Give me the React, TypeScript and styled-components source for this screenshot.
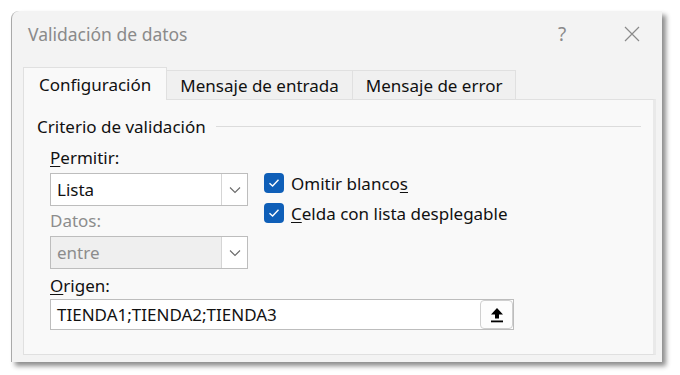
import React from 'react';
import styled, { createGlobalStyle } from 'styled-components';

const GlobalStyle = createGlobalStyle`
  html, body {
    margin: 0;
    padding: 0;
    background: #ffffff;
  }
  body {
    font-family: "Noto Sans", "Open Sans", sans-serif;
    color: #111111;
  }
`;

const Page = styled.div`
  width: 680px;
  height: 375px;
  padding: 11px 0 0 11px;
  box-sizing: border-box;
`;

const Dialog = styled.div`
  width: 651px;
  height: 351px;
  box-sizing: border-box;
  background: #f3f3f3;
  border-left: 1px solid #a9a9a9;
  border-top-left-radius: 8px;
  box-shadow: 4px 4px 5px rgba(0, 0, 0, 0.45);
  display: flex;
  flex-direction: column;
`;

const TitleBar = styled.div`
  height: 45px;
  display: flex;
  align-items: center;
  padding-left: 16px;
  padding-right: 10px;
`;

const Title = styled.div`
  flex: 1;
  font-size: 17.5px;
  color: #8a8a8a;
`;

const TitleButton = styled.div<{ $gap?: number }>`
  width: 40px;
  margin-right: ${(p) => p.$gap ?? 0}px;
  display: flex;
  justify-content: center;
  color: #8a8a8a;
  font-size: 19px;
`;

const Body = styled.div`
  padding: 12px 6px 7px 11px;
  display: flex;
  flex-direction: column;
  flex: 1;
`;

const TabRow = styled.div`
  display: flex;
  align-items: flex-end;
  height: 31px;
`;

const Tab = styled.div<{ $active?: boolean }>`
  box-sizing: border-box;
  height: ${(p) => (p.$active ? '33px' : '29px')};
  padding: 0 ${(p) => (p.$active ? '15px' : '13px')};
  display: flex;
  align-items: center;
  font-size: 17px;
  background: ${(p) => (p.$active ? '#f9f9f9' : '#f0f0f0')};
  border: 1px solid #e0e0e0;
  border-bottom: none;
  margin-bottom: ${(p) => (p.$active ? '-1px' : '0')};
  position: relative;
  z-index: ${(p) => (p.$active ? 1 : 0)};
  & + & {
    border-left: none;
  }
`;

const Panel = styled.div`
  flex: 1;
  background: #f9f9f9;
  border: 1px solid #e0e0e0;
  border-right: 3px solid #e9e9e9;
  padding: 16px 12px 0 13px;
`;

const Legend = styled.div`
  display: flex;
  align-items: center;
  gap: 10px;
  font-size: 17px;
  height: 20px;
  &::after {
    content: '';
    flex: 1;
    height: 1px;
    background: #dcdcdc;
  }
`;

const Content = styled.div`
  padding-left: 13px;
  padding-top: 11px;
`;

const Row = styled.div`
  display: flex;
  gap: 16px;
`;

const Column = styled.div`
  display: flex;
  flex-direction: column;
  width: 198px;
`;

const Label = styled.div<{ $disabled?: boolean }>`
  font-size: 17px;
  height: 22px;
  line-height: 22px;
  margin-bottom: 4px;
  color: ${(p) => (p.$disabled ? '#8c8c8c' : '#111111')};
  u {
    text-underline-offset: 2px;
  }
`;

const Select = styled.div<{ $disabled?: boolean }>`
  box-sizing: border-box;
  height: 33px;
  border: 1px solid #bdbdbd;
  background: ${(p) => (p.$disabled ? '#efefef' : '#ffffff')};
  color: ${(p) => (p.$disabled ? '#8c8c8c' : '#111111')};
  display: flex;
  align-items: stretch;
  font-size: 17px;
  margin-bottom: 4px;
`;

const SelectValue = styled.div`
  flex: 1;
  display: flex;
  align-items: center;
  padding-left: 6px;
`;

const SelectArrow = styled.div`
  width: 25px;
  border-left: 1px solid #d5d5d5;
  background: #ffffff;
  display: flex;
  align-items: center;
  justify-content: center;
`;

const Checks = styled.div`
  display: flex;
  flex-direction: column;
  gap: 10px;
  padding-top: 26px;
`;

const CheckRow = styled.div`
  display: flex;
  align-items: center;
  gap: 7px;
  font-size: 17px;
  height: 20px;
  u {
    text-underline-offset: 2px;
  }
`;

const CheckBox = styled.div`
  width: 20px;
  height: 20px;
  border-radius: 4px;
  background: #0f5fb8;
  display: flex;
  align-items: center;
  justify-content: center;
`;

const SourceLabel = styled(Label)`
  margin-top: 2px;
  margin-bottom: 2px;
`;

const SourceInput = styled.div`
  box-sizing: border-box;
  width: 464px;
  height: 31px;
  border: 1px solid #bdbdbd;
  background: #ffffff;
  display: flex;
  align-items: center;
  font-size: 17px;
  padding-left: 6px;
`;

const SourceText = styled.div`
  flex: 1;
`;

const CollapseButton = styled.div`
  box-sizing: border-box;
  width: 33px;
  height: 29px;
  border: 1px solid #cfcfcf;
  border-radius: 4px;
  background: #fdfdfd;
  display: flex;
  align-items: center;
  justify-content: center;
`;

const Chevron = () => (
  <svg width="12" height="8" viewBox="0 0 12 8">
    <path d="M1 1.5 L6 6.5 L11 1.5" fill="none" stroke="#6a6a6a" strokeWidth="1.1" />
  </svg>
);

const Tick = () => (
  <svg width="12" height="10" viewBox="0 0 12 10">
    <path d="M1.5 5.2 L4.6 8 L10.5 1.8" fill="none" stroke="#ffffff" strokeWidth="1.4" />
  </svg>
);

const UploadIcon = () => (
  <svg width="14" height="16" viewBox="0 0 14 16">
    <path d="M7 1 L13 7.5 L9 7.5 L9 11.5 L5 11.5 L5 7.5 L1 7.5 Z" fill="#000" />
    <rect x="1" y="13.5" width="12" height="1.8" fill="#000" />
  </svg>
);

const App: React.FC = () => {
  return (
    <>
      <GlobalStyle />
      <Page>
        <Dialog>
          <TitleBar>
            <Title>Validación de datos</Title>
            <TitleButton $gap={30}>?</TitleButton>
            <TitleButton>
              <svg width="16" height="16" viewBox="0 0 16 16">
                <path d="M1 1 L15 15 M15 1 L1 15" stroke="#8a8a8a" strokeWidth="1.2" />
              </svg>
            </TitleButton>
          </TitleBar>
          <Body>
            <TabRow>
              <Tab $active>Configuración</Tab>
              <Tab>Mensaje de entrada</Tab>
              <Tab>Mensaje de error</Tab>
            </TabRow>
            <Panel>
              <Legend>Criterio de validación</Legend>
              <Content>
                <Row>
                  <Column>
                    <Label>
                      <u>P</u>ermitir:
                    </Label>
                    <Select>
                      <SelectValue>Lista</SelectValue>
                      <SelectArrow>
                        <Chevron />
                      </SelectArrow>
                    </Select>
                    <Label $disabled>Datos:</Label>
                    <Select $disabled>
                      <SelectValue>entre</SelectValue>
                      <SelectArrow>
                        <Chevron />
                      </SelectArrow>
                    </Select>
                  </Column>
                  <Checks>
                    <CheckRow>
                      <CheckBox>
                        <Tick />
                      </CheckBox>
                      <span>
                        Omitir blanco<u>s</u>
                      </span>
                    </CheckRow>
                    <CheckRow>
                      <CheckBox>
                        <Tick />
                      </CheckBox>
                      <span>
                        <u>C</u>elda con lista desplegable
                      </span>
                    </CheckRow>
                  </Checks>
                </Row>
                <SourceLabel>
                  <u>O</u>rigen:
                </SourceLabel>
                <SourceInput>
                  <SourceText>TIENDA1;TIENDA2;TIENDA3</SourceText>
                  <CollapseButton>
                    <UploadIcon />
                  </CollapseButton>
                </SourceInput>
              </Content>
            </Panel>
          </Body>
        </Dialog>
      </Page>
    </>
  );
};

export default App;
